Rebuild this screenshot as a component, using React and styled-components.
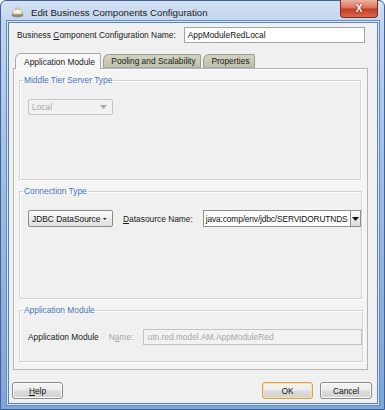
import styled, { createGlobalStyle } from "styled-components";

const GlobalStyle = createGlobalStyle`
  body {
    margin: 0;
    background: #ffffff;
    font-family: "Liberation Sans", Arial, sans-serif;
  }
`;

const Frame = styled.div`
  width: 385px;
  height: 410px;
  box-sizing: border-box;
  display: flex;
  flex-direction: column;
  padding: 0 6px 5px 7px;
  border: 1px solid #3f6396;
  border-radius: 6px 6px 0 0;
  background: linear-gradient(180deg, #d4e2f4 0, #c0d4ee 22px, #9fbce4 45%, #7fa5d9 100%);
`;

const TitleBar = styled.div`
  height: 21px;
  display: flex;
  align-items: center;
  gap: 7px;
  padding-left: 3px;
`;

const Title = styled.span`
  font-size: 9.7px;
  color: #1b1b1b;
  margin-top: 2px;
`;

const CloseButton = styled.div`
  margin-left: auto;
  align-self: flex-start;
  margin-top: -1px;
  width: 38px;
  height: 18px;
  box-sizing: border-box;
  display: flex;
  align-items: center;
  justify-content: center;
  border: 1px solid #7d2b1f;
  border-top: none;
  border-radius: 0 0 4px 4px;
  background: linear-gradient(180deg, #edb3a3 0, #d9735c 45%, #c43f24 55%, #d96a4e 100%);
  color: #fff;
  font-size: 10px;
  font-weight: bold;
  text-shadow: 0 0 2px #5a1408;
`;

const Client = styled.div`
  flex: 1;
  display: flex;
  flex-direction: column;
  background: #f0f0f0;
  border: 1px solid #5a80b8;
  box-shadow: 0 0 0 1px #dce8f7, 0 0 0 2px #5f8bc8;
  padding: 4px 5px 4px 2px;
  font-size: 8.4px;
  color: #1a1a1a;
`;

const NameRow = styled.div`
  display: flex;
  align-items: center;
  height: 16px;
  padding-left: 6px;
  padding-right: 6px;
`;

const Label = styled.span`
  white-space: nowrap;
  margin-left: ${(p) => p.ml || 0}px;
  color: ${(p) => (p.disabled ? "#a6a6a6" : "#1a1a1a")};
`;

const TextBox = styled.div`
  box-sizing: border-box;
  height: ${(p) => p.h || 16}px;
  width: ${(p) => p.w}px;
  margin-left: ${(p) => p.ml || 0}px;
  display: flex;
  align-items: center;
  padding-left: 3px;
  background: ${(p) => (p.disabled ? "#f2f2f2" : "#ffffff")};
  border: 1px solid ${(p) => (p.disabled ? "#c4c4c4" : "#a0a4ab")};
  color: ${(p) => (p.disabled ? "#a8a8a8" : "#111")};
  white-space: nowrap;
  overflow: hidden;
`;

const TabStrip = styled.div`
  display: flex;
  align-items: flex-end;
  height: 15px;
  margin-top: 10px;
  padding-left: 4px;
  position: relative;
  z-index: 1;
`;

const Tab = styled.div`
  box-sizing: border-box;
  height: ${(p) => (p.active ? 16 : 14)}px;
  margin-bottom: ${(p) => (p.active ? -1 : 0)}px;
  width: ${(p) => p.w}px;
  margin-right: 2px;
  display: flex;
  align-items: center;
  justify-content: center;
  padding-left: 3px;
  border: 1px solid ${(p) => (p.active ? "#a9a9a9" : "#9c9d8f")};
  border-bottom: ${(p) => (p.active ? "none" : "1px solid #a9a9a9")};
  border-radius: 6px 2px 0 0;
  background: ${(p) => (p.active ? "#f7f7f7" : "linear-gradient(180deg, #d2d4c0, #bfc1ab)")};
  color: #1a1a1a;
  white-space: nowrap;
`;

const TabPanel = styled.div`
  flex: 1;
  margin-left: 2px;
  margin-right: 4px;
  border: 1px solid #b4b4b4;
  box-shadow: inset 1px 1px 0 #ffffff;
  background: #f4f4f4;
  padding: 6px 6px 7px 5px;
  display: flex;
  flex-direction: column;
  gap: 6px;
`;

const Group = styled.fieldset`
  margin: 0;
  padding: 0 0 0 8px;
  height: ${(p) => (p.h ? `${p.h}px` : "auto")};
  flex: ${(p) => (p.h ? "none" : "1")};
  box-sizing: border-box;
  border: 1px solid #d2d2d2;
  box-shadow: inset 1px 1px 0 #ffffff, 1px 1px 0 #ffffff;
  background: #f0f0f0;
  display: flex;
  flex-direction: column;
`;

const Legend = styled.legend`
  margin-left: -5px;
  padding: 0 1px;
  color: #4a72b4;
  font-size: 8.4px;
  line-height: 10px;
`;

const Row = styled.div`
  display: flex;
  align-items: center;
  margin-top: ${(p) => p.mt}px;
`;

const Select = styled.div`
  box-sizing: border-box;
  width: 85px;
  height: ${(p) => p.h || 16}px;
  display: flex;
  align-items: center;
  justify-content: space-between;
  gap: 3px;
  padding: 0 5px 0 3px;
  border: 1px solid ${(p) => (p.disabled ? "#c6c6c6" : "#8a8a8a")};
  border-radius: 2px;
  background: ${(p) =>
    p.disabled ? "#f1f1f1" : "linear-gradient(180deg, #fdfdfd 0, #eeeeee 50%, #e0e0e0 100%)"};
  color: ${(p) => (p.disabled ? "#a9a9a9" : "#111")};
  white-space: nowrap;
`;

const Combo = styled.div`
  display: flex;
  margin-left: 10px;
  height: 17px;
  width: 158px;
  box-sizing: border-box;
  border: 1px solid #8e8e8e;
  background: #fff;
`;

const ComboText = styled.div`
  flex: 1;
  display: flex;
  align-items: center;
  padding-left: 2px;
  border-right: 1px solid #8e8e8e;
  white-space: nowrap;
  overflow: hidden;
  letter-spacing: -0.15px;
  color: #111;
`;

const ComboButton = styled.div`
  width: 9px;
  display: flex;
  align-items: center;
  justify-content: center;
  background: linear-gradient(180deg, #fafafa, #dcdcdc);
`;

const ButtonBar = styled.div`
  display: flex;
  align-items: center;
  gap: 7px;
  margin-top: 12px;
  padding-left: 1px;
`;

const Button = styled.div`
  box-sizing: border-box;
  width: ${(p) => p.w || 51}px;
  height: 17px;
  margin-left: ${(p) => (p.push ? "auto" : "0")};
  display: flex;
  align-items: center;
  justify-content: center;
  border: 1px solid ${(p) => (p.primary ? "#d9a14f" : "#8b8b8b")};
  border-radius: 3px;
  box-shadow: inset 0 0 0 1px ${(p) => (p.primary ? "#f6e0b0" : "#fbfbfb")};
  background: linear-gradient(180deg, #f5f5f5 0, #ebebeb 48%, #dcdcdc 52%, #d0d0d0 100%);
  color: #111;
`;

const Arrow = ({ color = "#222" }) => (
  <svg width="7" height="4" viewBox="0 0 7 4">
    <path d="M0 0h7L3.5 4z" fill={color} />
  </svg>
);

const AppIcon = () => (
  <svg width="13" height="12" viewBox="0 0 13 12">
    <ellipse cx="6.5" cy="9" rx="6" ry="2.6" fill="#8e8a80" />
    <path d="M2 8.5V5.5c0-1.4 2-2.4 4.5-2.4S11 4.1 11 5.5v3z" fill="#e9e2c8" stroke="#9c8e66" strokeWidth="0.6" />
    <ellipse cx="6.5" cy="5.3" rx="4.3" ry="1.6" fill="#f6f0dc" />
    <path d="M5 1.2c0.8 0.6 -0.6 1.2 0.4 1.8M7.5 0.8c0.8 0.6 -0.6 1.2 0.4 1.8" stroke="#b7a98a" strokeWidth="0.7" fill="none" />
  </svg>
);

export default function App() {
  return (
    <>
      <GlobalStyle />
      <Frame>
        <TitleBar>
          <AppIcon />
          <Title>Edit Business Components Configuration</Title>
          <CloseButton>X</CloseButton>
        </TitleBar>
        <Client>
          <NameRow>
            <Label>
              Business <u>C</u>omponent Configuration Name:
            </Label>
            <TextBox w={181} ml={8}>AppModuleRedLocal</TextBox>
          </NameRow>

          <TabStrip>
            <Tab active w={86}>Application Module</Tab>
            <Tab w={98}>Pooling and Scalability</Tab>
            <Tab w={52}>Properties</Tab>
          </TabStrip>

          <TabPanel>
            <Group h={105}>
              <Legend>Middle Tier Server Type</Legend>
              <Row mt={14}>
                <Select disabled>
                  Local
                  <Arrow color="#a9a9a9" />
                </Select>
              </Row>
            </Group>

            <Group h={113}>
              <Legend>Connection Type</Legend>
              <Row mt={14}>
                <Select h={17}>
                  JDBC DataSource
                  <Arrow />
                </Select>
                <Label ml={10}>
                  <u>D</u>atasource Name:
                </Label>
                <Combo>
                  <ComboText>java:comp/env/jdbc/SERVIDORUTNDS</ComboText>
                  <ComboButton>
                    <Arrow color="#111" />
                  </ComboButton>
                </Combo>
              </Row>
            </Group>

            <Group>
              <Legend>Application Module</Legend>
              <Row mt={14}>
                <Label>Application Module</Label>
                <Label disabled ml={10}>
                  N<u>a</u>me:
                </Label>
                <TextBox disabled w={219} ml={10}>
                  utn.red.model.AM.AppModuleRed
                </TextBox>
              </Row>
            </Group>
          </TabPanel>

          <ButtonBar>
            <Button>
              <u>H</u>elp
            </Button>
            <Button push primary>
              OK
            </Button>
            <Button w={52}>Cancel</Button>
          </ButtonBar>
        </Client>
      </Frame>
    </>
  );
}
